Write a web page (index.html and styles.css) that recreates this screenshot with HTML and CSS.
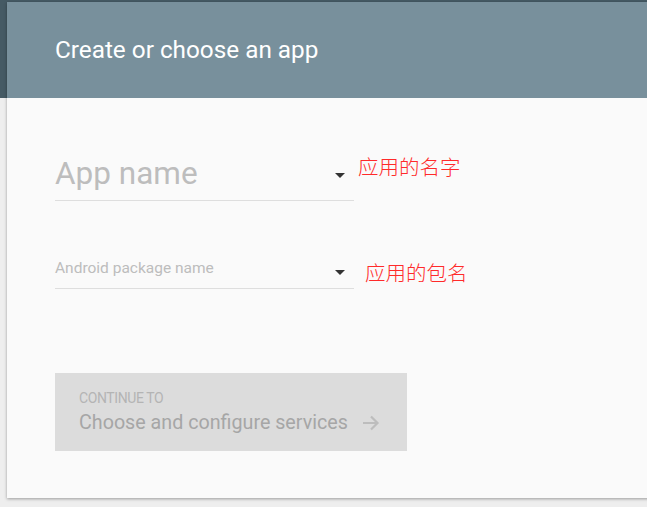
FILE: index.html
```html
<!DOCTYPE html>
<html>
<head>
<meta charset="utf-8">
<link rel="stylesheet" href="styles.css">
</head>
<body>
<div class="page">
  <div class="card">
    <div class="header">
      <h1 class="title">Create or choose an app</h1>
    </div>
    <div class="body">
      <div class="row row-name">
        <div class="field field-big">
          <span class="placeholder">App name</span>
          <span class="caret"></span>
        </div>
        <span class="note note-1">应用的名字</span>
      </div>
      <div class="row row-pkg">
        <div class="field field-small">
          <span class="placeholder">Android package name</span>
          <span class="caret"></span>
        </div>
        <span class="note note-2">应用的包名</span>
      </div>
      <div class="button">
        <div class="btn-label">CONTINUE TO</div>
        <div class="btn-main">
          <span>Choose and configure services</span>
          <svg class="arrow" width="18" height="16" viewBox="0 0 18 16"><path d="M1 8h14.5M9 1.5l6.5 6.5L9 14.5" fill="none" stroke="#bdbdbd" stroke-width="2.2"/></svg>
        </div>
      </div>
    </div>
  </div>
</div>
</body>
</html>
```

FILE: styles.css
```css
html, body {
  margin: 0;
  padding: 0;
}
body {
  font-family: Roboto, "Noto Sans", sans-serif;
  background: #eeeeee;
  width: 647px;
  height: 507px;
  overflow: hidden;
}
.page {
  background: linear-gradient(to bottom, #455a64 0, #455a64 98px, #eeeeee 98px);
  padding: 2px 0 0 7px;
  height: 505px;
}
.card {
  width: 660px;
  height: 496px;
  background: #fafafa;
  box-shadow: 0 1px 3px rgba(0,0,0,0.35);
  display: flex;
  flex-direction: column;
}
.header {
  height: 96px;
  background: #78909c;
  display: flex;
  align-items: center;
  padding-left: 48px;
  box-sizing: border-box;
}
.title {
  margin: 0;
  color: #ffffff;
  font-weight: 400;
  font-size: 24.3px;
  line-height: 1;
  padding-top: 0;
}
.body {
  padding-left: 48px;
  display: flex;
  flex-direction: column;
}
.row {
  display: flex;
  align-items: flex-start;
}
.field {
  width: 299px;
  border-bottom: 1px solid #dedede;
  display: flex;
  align-items: flex-end;
  justify-content: space-between;
  position: relative;
}
.placeholder {
  color: #bdbdbd;
}
.field-big {
  margin-top: 54px;
  height: 48px;
}
.field-big .placeholder {
  font-size: 31.5px;
  line-height: 36px;
  padding-bottom: 8px;
}
.field-small {
  margin-top: 54px;
  height: 33px;
}
.field-small .placeholder {
  font-size: 15.5px;
  line-height: 20px;
  padding-bottom: 10px;
}
.caret {
  width: 0;
  height: 0;
  border-left: 5px solid transparent;
  border-right: 5px solid transparent;
  border-top: 5px solid #333333;
  margin-right: 9px;
}
.field-big .caret {
  margin-bottom: 22px;
}
.field-small .caret {
  margin-bottom: 13px;
}
.note {
  color: #ff2a2a;
  font-family: "Noto Sans CJK SC", sans-serif;
  font-weight: 300;
  font-size: 20.5px;
  line-height: 24px;
}
.note-1 {
  margin-left: 4px;
  margin-top: 56px;
}
.note-2 {
  margin-left: 11px;
  margin-top: 59px;
}
.button {
  margin-top: 84px;
  width: 352px;
  height: 78px;
  background: #dcdcdc;
  box-sizing: border-box;
  padding: 17px 0 0 24px;
}
.btn-label {
  font-size: 14px;
  color: #b4b4b4;
  line-height: 16px;
  letter-spacing: -0.4px;
}
.btn-main {
  display: flex;
  align-items: center;
  font-size: 19.7px;
  color: #a6a6a6;
  line-height: 26px;
  margin-top: 4px;
}
.arrow {
  margin-left: 14px;
}
```
